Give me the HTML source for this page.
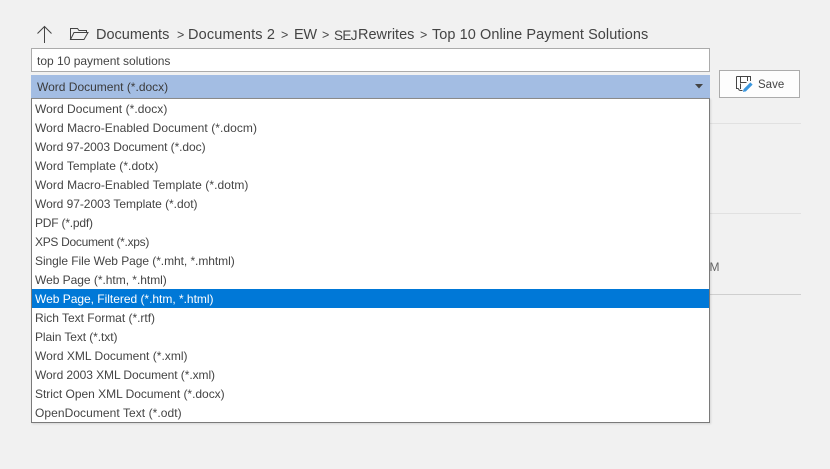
<!DOCTYPE html>
<html><head><meta charset="utf-8">
<style>
html,body{margin:0;padding:0;width:830px;height:469px;overflow:hidden;background:#f1f1f1;font-family:"Liberation Sans",sans-serif;}
.a{position:absolute;white-space:nowrap;}
.b{position:absolute;white-space:nowrap;top:26px;font-size:14.5px;line-height:19px;color:#444;}
.g{font-size:12.5px;}
.list{position:absolute;left:31px;top:98px;width:677px;height:323px;background:#fff;border:1px solid #7a7a7a;box-shadow:1px 1px 2px rgba(0,0,0,.12);border-top-color:#8a8a8a;}
.i{position:absolute;left:0;width:677px;height:19px;line-height:21px;font-size:12px;color:#444;padding-left:3px;box-sizing:border-box;white-space:nowrap;}
.s{background:#0078d7;color:#fff;}
</style></head><body>
<svg class="a" style="left:34px;top:22px" width="70" height="24" viewBox="0 0 70 24" fill="none" stroke="#444" stroke-width="1">
<path d="M10.5 4.5V21M3.5 11.5L10.5 4.5L17.5 11.5"/>
<path d="M36.5 17.5V6.5H43.5L45 8.5H52.5V10.5M36.5 17.5H50L54 10.5H40L36.5 17.5Z"/>
</svg>
<div class="b" style="left:96px">Documents</div>
<div class="b g" style="left:177px">&gt;</div>
<div class="b" style="left:188px;letter-spacing:.15px">Documents 2</div>
<div class="b g" style="left:281px">&gt;</div>
<div class="b" style="left:294px;letter-spacing:-.3px">EW</div>
<div class="b g" style="left:322px">&gt;</div>
<div class="b" style="left:334px;font-size:13.5px;letter-spacing:-.6px">SEJ</div>
<div class="b" style="left:358px">Rewrites</div>
<div class="b g" style="left:420px">&gt;</div>
<div class="b" style="left:432px;letter-spacing:.06px">Top 10 Online Payment Solutions</div>
<div class="a" style="left:31px;top:48px;width:677px;height:22px;background:#fff;border:1px solid #ababab"></div>
<div class="a" style="left:37px;top:52px;font-size:12px;line-height:18px;color:#444">top 10 payment solutions</div>
<div class="a" style="left:31px;top:75px;width:679px;height:23px;background:#a3bde3"></div>
<div class="a" style="left:37px;top:78px;font-size:12px;line-height:18px;color:#3b3b3b">Word Document (*.docx)</div>
<svg class="a" style="left:695px;top:84px" width="9" height="6"><path d="M0 0H8L4 4.5Z" fill="#444"/></svg>
<div class="a" style="left:719px;top:70px;width:79px;height:26px;background:#fdfdfd;border:1px solid #ababab"></div>
<svg class="a" style="left:735px;top:74px" width="20" height="20" viewBox="0 0 20 20" fill="none">
<path d="M1.5 2.5H15.5V7M1.5 2.5V14.5H3.5M3.5 14.5C3.5 15.8 4.5 16.5 6 16.5H7.5" stroke="#444"/>
<path d="M5.5 2.5V8.5H11.5M12.5 2.5V7M5.5 9.5V15" stroke="#444"/>
<path d="M9.5 16.5L16.5 9.5" stroke="#3a96dd" stroke-width="3.2"/>
<path d="M8 18L8.6 15L10.8 17.3Z" fill="#3a96dd"/>
</svg>
<div class="a" style="left:758px;top:76px;font-size:11.5px;line-height:18px;color:#444">Save</div>
<div class="a" style="left:710px;top:123px;width:91px;height:1px;background:#e1e1e1"></div>
<div class="a" style="left:710px;top:213px;width:91px;height:1px;background:#e1e1e1"></div>
<div class="a" style="left:710px;top:294px;width:91px;height:1px;background:#cfcfcf"></div>
<div class="a" style="left:709.5px;top:259px;font-size:12px;line-height:16px;color:#666">M</div>
<div class="list">
<div class="i" style="top:0;letter-spacing:.055px">Word Document (*.docx)</div>
<div class="i" style="top:19px;letter-spacing:.06px">Word Macro-Enabled Document (*.docm)</div>
<div class="i" style="top:38px;letter-spacing:-.07px">Word 97-2003 Document (*.doc)</div>
<div class="i" style="top:57px;letter-spacing:.05px">Word Template (*.dotx)</div>
<div class="i" style="top:76px;letter-spacing:.07px">Word Macro-Enabled Template (*.dotm)</div>
<div class="i" style="top:95px;letter-spacing:-.04px">Word 97-2003 Template (*.dot)</div>
<div class="i" style="top:114px;letter-spacing:-.2px">PDF (*.pdf)</div>
<div class="i" style="top:133px;letter-spacing:-.3px">XPS Document (*.xps)</div>
<div class="i" style="top:152px;letter-spacing:-.06px">Single File Web Page (*.mht, *.mhtml)</div>
<div class="i" style="top:171px;letter-spacing:-.03px">Web Page (*.htm, *.html)</div>
<div class="i s" style="top:190px;letter-spacing:-.02px">Web Page, Filtered (*.htm, *.html)</div>
<div class="i" style="top:209px;letter-spacing:-.02px">Rich Text Format (*.rtf)</div>
<div class="i" style="top:228px;letter-spacing:-.08px">Plain Text (*.txt)</div>
<div class="i" style="top:247px;letter-spacing:.02px">Word XML Document (*.xml)</div>
<div class="i" style="top:266px;letter-spacing:-.07px">Word 2003 XML Document (*.xml)</div>
<div class="i" style="top:285px;letter-spacing:-.02px">Strict Open XML Document (*.docx)</div>
<div class="i" style="top:304px;letter-spacing:.06px">OpenDocument Text (*.odt)</div>
</div>
</body></html>
